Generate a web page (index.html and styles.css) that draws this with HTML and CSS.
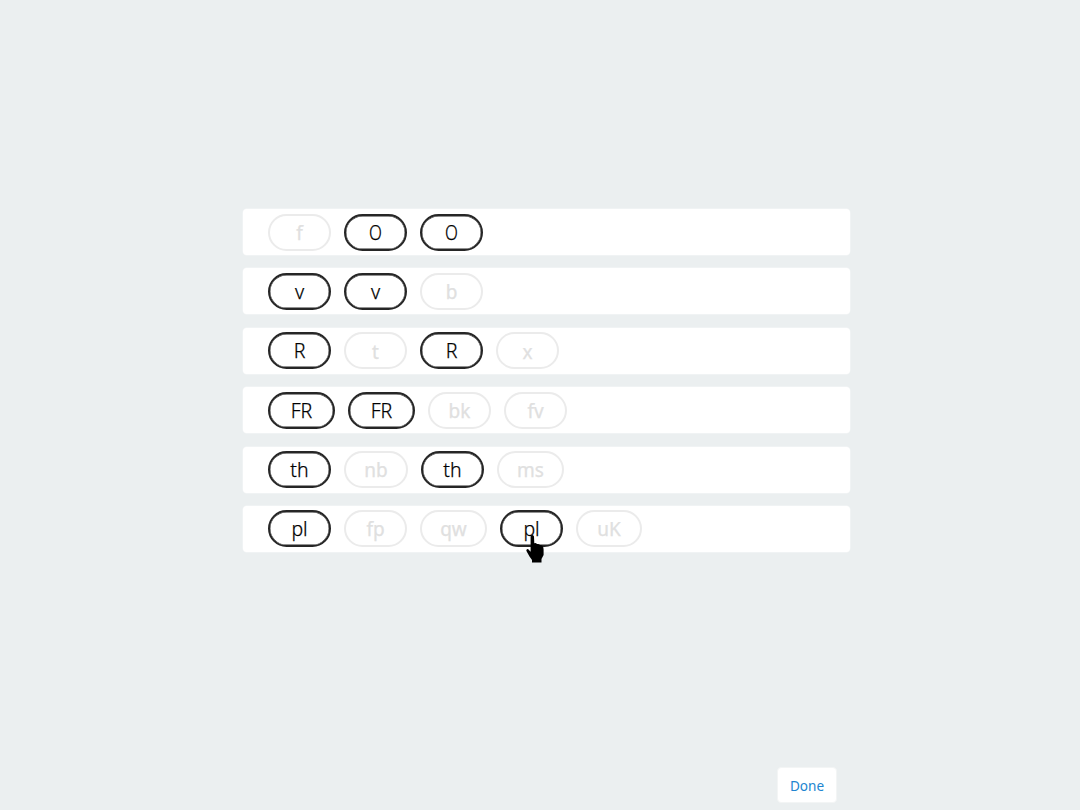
FILE: index.html
```html
<!DOCTYPE html>
<html lang="en">
<head>
<meta charset="utf-8">
<title>Matching letters</title>
<link rel="stylesheet" href="styles.css">
</head>
<body>
<main class="board">
  <div class="row"><button class="pill faded"><span>f</span></button><button class="pill"><span class="narrow">O</span></button><button class="pill"><span class="narrow">O</span></button></div>
  <div class="row"><button class="pill"><span class="low">v</span></button><button class="pill"><span class="low">v</span></button><button class="pill faded"><span>b</span></button></div>
  <div class="row"><button class="pill"><span>R</span></button><button class="pill faded"><span class="low">t</span></button><button class="pill"><span>R</span></button><button class="pill faded"><span class="low">x</span></button></div>
  <div class="row"><button class="pill wide"><span>FR</span></button><button class="pill wide"><span>FR</span></button><button class="pill faded"><span>bk</span></button><button class="pill faded"><span>fv</span></button></div>
  <div class="row"><button class="pill"><span>th</span></button><button class="pill faded mid"><span>nb</span></button><button class="pill"><span>th</span></button><button class="pill faded wide"><span>ms</span></button></div>
  <div class="row"><button class="pill"><span>pl</span></button><button class="pill faded"><span>fp</span></button><button class="pill faded wide"><span>qw</span></button><button class="pill"><span>pl</span></button><button class="pill faded semiwide"><span>uK</span></button></div>
</main>
<footer class="actions"><button class="done">Done</button></footer>
<svg class="pointer" width="18" height="28" viewBox="0 0 18 28"><path d="M4.6 1.5Q4.8 0 6.3 0Q7.8 0 8 1.5L8.3 8.2Q10 7.7 11 9Q13 8.6 14 10Q16.2 9.8 17.2 11.8L17.6 14.5V20L15.5 24V27.5H6V25L3.5 21.5L0.3 15.8Q0.3 13.8 2 14L4.6 16.8Z"/></svg>
</body>
</html>
```
FILE: styles.css
```css
* { box-sizing: border-box; }
body {
  margin: 0;
  height: 810px;
  overflow: hidden;
  display: flex;
  flex-direction: column;
  background: #ebeff0;
  font-family: "Noto Sans", "Open Sans", sans-serif;
}
.board {
  width: 607px;
  margin: 209px 0 0 243px;
  display: flex;
  flex-direction: column;
  gap: 13.4px;
}
.row {
  height: 46px;
  padding-left: 25px;
  display: flex;
  align-items: center;
  gap: 13px;
  background: #fff;
  box-shadow: 0 0 0 .5px #f5f7f7;
  border-radius: 4px;
}
.pill {
  width: 63px;
  height: 37px;
  padding: 1px 0 0;
  display: flex;
  align-items: center;
  justify-content: center;
  border: 2px solid #262626;
  box-shadow: inset 0 0 0 .4px #262626;
  border-radius: 19px;
  background: #fff;
  color: #000;
  font: 300 19.5px/26px "Noto Sans", sans-serif;
  -webkit-text-stroke: .25px currentColor;
}
.pill .narrow { transform: scaleX(.86); }
.pill .low { padding-top: 1px; }
.pill.mid { width: 64px; }
.pill.semiwide { width: 66px; }
.pill.wide { width: 67px; }
.pill.faded {
  border-color: #ebebeb;
  box-shadow: none;
  color: #e0e0e0;
  font-weight: 400;
  font-size: 19px;
}
.actions {
  margin-top: auto;
  padding: 0 243px 7px 0;
  display: flex;
  justify-content: flex-end;
}
.done {
  width: 60px;
  height: 36px;
  padding: 1px 0 0;
  border: 1px solid #f3f5f5;
  border-radius: 4px;
  background: #fff;
  color: #2185d0;
  font: 13.6px/20px "Noto Sans", sans-serif;
}
.pointer {
  position: absolute;
  left: 526px;
  top: 535px;
}
```
